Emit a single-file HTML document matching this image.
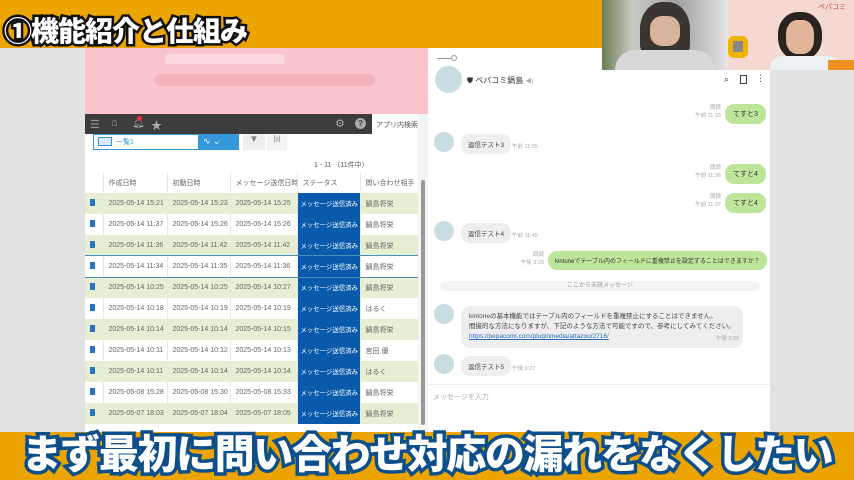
<!DOCTYPE html>
<html><head><meta charset="utf-8"><style>
*{margin:0;padding:0;box-sizing:border-box}
body{width:854px;height:480px;overflow:hidden;position:relative;background:#e2e2e2;font-family:"Liberation Sans","Noto Sans CJK JP",sans-serif}
.a{position:absolute}
.top{left:0;top:0;width:854px;height:48px;background:#eba400}
.bot{left:0;top:432px;width:854px;height:48px;background:#eba400}
.title{left:4px;top:10px;font-size:28px;font-weight:900;color:#fff;letter-spacing:-1px;-webkit-text-stroke:5px #111;paint-order:stroke fill;white-space:nowrap}
.cap{left:0;top:422px;width:854px;text-align:center;font-size:40px;font-weight:900;color:#fff;letter-spacing:-1.4px;-webkit-text-stroke:7px #0d4f8a;paint-order:stroke fill;white-space:nowrap}
.kin{left:85px;top:48px;width:343px;height:384px;background:#fff;overflow:hidden}
.pink{left:0;top:0;width:343px;height:66px;background:#f9c4cc}
.dark{left:0;top:66px;width:287px;height:20px;background:#3c3c3c}
.t{font-size:7px;color:#555;white-space:nowrap}
table{position:absolute;left:0;top:124px;border-collapse:collapse;font-size:7px;color:#666;table-layout:fixed;width:333px}
td{height:21px;border-right:1px solid #e8e8e8;padding-left:5px;white-space:nowrap;overflow:hidden}
tr.g td{background:#e6efd3}
td.s{background:#0a5aac!important;color:#fff;padding-left:3px;font-size:6.4px}
td.i{padding-left:5px}
.doc{display:inline-block;width:5px;height:7px;background:#2a72c4}
.chat{left:428px;top:48px;width:342px;height:384px;background:#fff;overflow:hidden}
.av{border-radius:50%;background:#c9dce2}
.gb{background:#eee;border-radius:9px;font-size:6.5px;color:#444;padding:5px 7px;white-space:nowrap}
.lb{background:#bde69a;border-radius:9px;font-size:7px;color:#333;padding:5px 8px;white-space:nowrap}
.tm{font-size:5.5px;color:#aaa;text-align:right;line-height:8px;white-space:nowrap}
</style></head><body>
<div class="a top"></div>
<div class="a bot"></div>
<div class="a title">①機能紹介と仕組み</div>

<div class="a kin">
 <div class="a pink"></div>
 <div class="a" style="left:80px;top:6px;width:120px;height:10px;background:#fbd9de;border-radius:3px"></div>
 <div class="a" style="left:70px;top:26px;width:220px;height:12px;background:#f4b2bd;border-radius:6px"></div>
 <div class="a dark"></div>
 <div class="a" style="left:5px;top:70px;color:#999;font-size:11px">☰</div>
 <div class="a" style="left:26px;top:69px;color:#aaa;font-size:11px">⌂</div>
 <div class="a" style="left:47px;top:70px;color:#aaa;font-size:10px">🔔︎</div>
 <div class="a" style="left:52px;top:68px;width:5px;height:5px;background:#e34;border-radius:50%"></div>
 <div class="a" style="left:66px;top:69px;color:#aaa;font-size:11px">★</div>
 <div class="a" style="left:250px;top:69px;color:#aaa;font-size:11px">⚙</div>
 <div class="a" style="left:270px;top:70px;width:11px;height:11px;border-radius:50%;background:#aaa;color:#3c3c3c;font-size:8px;text-align:center;font-weight:bold;line-height:11px">?</div>
 <div class="a t" style="left:291px;top:72px">アプリ内検索</div>
 <div class="a" style="left:8px;top:86px;width:106px;height:16px;border:1px solid #3498db;background:#fff"></div>
 <div class="a" style="left:13px;top:89px;width:14px;height:9px;border:1px solid #3498db;background:#dbeaf8"></div>
 <div class="a t" style="left:31px;top:89px;color:#3498db">一覧1</div>
 <div class="a" style="left:114px;top:86px;width:40px;height:16px;background:#3498db;color:#fff;font-size:9px;padding-left:4px;line-height:15px">∿ ⌄</div>
 <div class="a" style="left:158px;top:86px;width:22px;height:16px;background:#eee;color:#888;font-size:10px;text-align:center">▼</div>
 <div class="a" style="left:182px;top:86px;width:20px;height:16px;background:#f3f3f3;color:#888;font-size:9px;text-align:center">lıl</div>
 <div class="a t" style="left:229px;top:112px">1 - 11 （11件中）</div>
 <table>
  <colgroup><col style="width:18px"><col style="width:64px"><col style="width:63px"><col style="width:67px"><col style="width:63px"><col style="width:58px"></colgroup>
  <tr><td class="i"></td><td>作成日時</td><td>初動日時</td><td>メッセージ送信日時</td><td>ステータス</td><td>問い合わせ相手</td></tr>
  <tr class="g"><td class="i"><span class="doc"></span></td><td>2025-05-14 15:21</td><td>2025-05-14 15:23</td><td>2025-05-14 15:25</td><td class="s">メッセージ送信済み</td><td>鍋島将栄</td></tr>
  <tr><td class="i"><span class="doc"></span></td><td>2025-05-14 11:37</td><td>2025-05-14 15:26</td><td>2025-05-14 15:26</td><td class="s">メッセージ送信済み</td><td>鍋島将栄</td></tr>
  <tr class="g"><td class="i"><span class="doc"></span></td><td>2025-05-14 11:36</td><td>2025-05-14 11:42</td><td>2025-05-14 11:42</td><td class="s">メッセージ送信済み</td><td>鍋島将栄</td></tr>
  <tr style="outline:1px solid #4a8fb8"><td class="i"><span class="doc"></span></td><td>2025-05-14 11:34</td><td>2025-05-14 11:35</td><td>2025-05-14 11:36</td><td class="s">メッセージ送信済み</td><td>鍋島将栄</td></tr>
  <tr class="g"><td class="i"><span class="doc"></span></td><td>2025-05-14 10:25</td><td>2025-05-14 10:25</td><td>2025-05-14 10:27</td><td class="s">メッセージ送信済み</td><td>鍋島将栄</td></tr>
  <tr><td class="i"><span class="doc"></span></td><td>2025-05-14 10:18</td><td>2025-05-14 10:19</td><td>2025-05-14 10:19</td><td class="s">メッセージ送信済み</td><td>はるく</td></tr>
  <tr class="g"><td class="i"><span class="doc"></span></td><td>2025-05-14 10:14</td><td>2025-05-14 10:14</td><td>2025-05-14 10:15</td><td class="s">メッセージ送信済み</td><td>鍋島将栄</td></tr>
  <tr><td class="i"><span class="doc"></span></td><td>2025-05-14 10:11</td><td>2025-05-14 10:12</td><td>2025-05-14 10:13</td><td class="s">メッセージ送信済み</td><td>宮田 優</td></tr>
  <tr class="g"><td class="i"><span class="doc"></span></td><td>2025-05-14 10:11</td><td>2025-05-14 10:14</td><td>2025-05-14 10:14</td><td class="s">メッセージ送信済み</td><td>はるく</td></tr>
  <tr><td class="i"><span class="doc"></span></td><td>2025-05-08 15:28</td><td>2025-05-08 15:30</td><td>2025-05-08 15:33</td><td class="s">メッセージ送信済み</td><td>鍋島将栄</td></tr>
  <tr class="g"><td class="i"><span class="doc"></span></td><td>2025-05-07 18:03</td><td>2025-05-07 18:04</td><td>2025-05-07 18:05</td><td class="s">メッセージ送信済み</td><td>鍋島将栄</td></tr>
 </table>
 <div class="a" style="left:333px;top:66px;width:10px;height:318px;background:#f4f4f4"></div>
 <div class="a" style="left:336px;top:132px;width:4px;height:245px;background:#999;border-radius:2px"></div>
</div>

<div class="a chat">
 <div class="a" style="left:9px;top:10px;width:14px;height:1px;background:#999"></div>
 <div class="a" style="left:23px;top:7px;width:6px;height:6px;border:1px solid #999;border-radius:50%"></div>
 <div class="a av" style="left:7px;top:18px;width:27px;height:27px"></div>
 <div class="a" style="left:39px;top:27px;font-size:8px;color:#333">⛊ ペパコミ鍋島 <span style="color:#aaa;font-size:6px">◀)</span></div>
 <div class="a" style="left:296px;top:26px;font-size:9px;color:#333">⌕</div>
 <div class="a" style="left:312px;top:27px;width:7px;height:9px;border:1px solid #444"></div>
 <div class="a" style="left:328px;top:25px;font-size:9px;color:#444">⋮</div>

 <div class="a tm" style="left:240px;top:56px;width:53px">既読<br>午前 11:33</div>
 <div class="a lb" style="left:297px;top:56px">てすと3</div>
 <div class="a av" style="left:6px;top:84px;width:20px;height:20px"></div>
 <div class="a gb" style="left:33px;top:86px">返信テスト3</div>
 <div class="a tm" style="left:84px;top:95px;text-align:left">午前 11:35</div>
 <div class="a tm" style="left:240px;top:116px;width:53px">既読<br>午前 11:36</div>
 <div class="a lb" style="left:297px;top:116px">てすと4</div>
 <div class="a tm" style="left:240px;top:145px;width:53px">既読<br>午前 11:37</div>
 <div class="a lb" style="left:297px;top:145px">てすと4</div>
 <div class="a av" style="left:6px;top:173px;width:20px;height:20px"></div>
 <div class="a gb" style="left:33px;top:175px">返信テスト4</div>
 <div class="a tm" style="left:84px;top:184px;text-align:left">午前 11:45</div>
 <div class="a tm" style="left:80px;top:203px;width:36px">既読<br>午後 3:20</div>
 <div class="a lb" style="left:120px;top:203px;font-size:6px;padding:5px 7px">kintoneでテーブル内のフィールドに重複禁止を設定することはできますか？</div>
 <div class="a" style="left:12px;top:233px;width:320px;height:10px;background:#f5f5f5;border-radius:5px;font-size:6px;color:#999;text-align:center;line-height:10px">ここから未読メッセージ</div>
 <div class="a av" style="left:6px;top:256px;width:20px;height:20px"></div>
 <div class="a gb" style="left:33px;top:258px;line-height:10px;padding:6px 8px;font-size:6.5px">kintoneの基本機能ではテーブル内のフィールドを重複禁止にすることはできません。<br>間接的な方法になりますが、下記のような方法で可能ですので、参考にしてみてください。<br><span style="color:#2a6bc0;text-decoration:underline">https://pepacomi.com/pluginmedia/attazoo/2716/</span></div>
 <div class="a tm" style="left:288px;top:287px;text-align:left">午後 3:25</div>
 <div class="a av" style="left:6px;top:306px;width:20px;height:20px"></div>
 <div class="a gb" style="left:33px;top:308px">返信テスト5</div>
 <div class="a tm" style="left:84px;top:317px;text-align:left">午後 3:27</div>
 <div class="a" style="left:0;top:336px;width:342px;height:1px;background:#eee"></div>
 <div class="a" style="left:5px;top:344px;font-size:7px;color:#aaa">メッセージを入力</div>
</div>

<div class="a" style="left:602px;top:0;width:126px;height:70px;background:linear-gradient(90deg,#6d7d55 0%,#c8ccc4 25%,#a0a0a0 60%,#e6e6e6 100%)"></div>
<div class="a" style="left:640px;top:2px;width:50px;height:60px;border-radius:45% 45% 30% 30%;background:#3a3530"></div>
<div class="a" style="left:650px;top:16px;width:30px;height:30px;border-radius:40%;background:#d9b49a"></div>
<div class="a" style="left:615px;top:50px;width:100px;height:20px;background:#d8d8d8;border-radius:20px 20px 0 0"></div>
<div class="a" style="left:728px;top:0;width:126px;height:70px;background:#f6d8d2"></div>
<div class="a" style="left:728px;top:36px;width:20px;height:22px;background:#f1b400;border-radius:6px"></div>
<div class="a" style="left:733px;top:41px;width:10px;height:11px;background:#888"></div>
<div class="a" style="left:778px;top:12px;width:44px;height:48px;border-radius:45%;background:#2a2220"></div>
<div class="a" style="left:786px;top:20px;width:28px;height:34px;border-radius:40%;background:#e2b59a"></div>
<div class="a" style="left:770px;top:56px;width:70px;height:14px;background:#eef1f4;border-radius:12px 12px 0 0"></div>
<div class="a" style="left:828px;top:60px;width:26px;height:10px;background:#f09020"></div>
<div class="a" style="left:818px;top:2px;font-size:7px;color:#c44">ペパコミ</div>

<div class="a cap">まず最初に問い合わせ対応の漏れをなくしたい</div>
</body></html>
